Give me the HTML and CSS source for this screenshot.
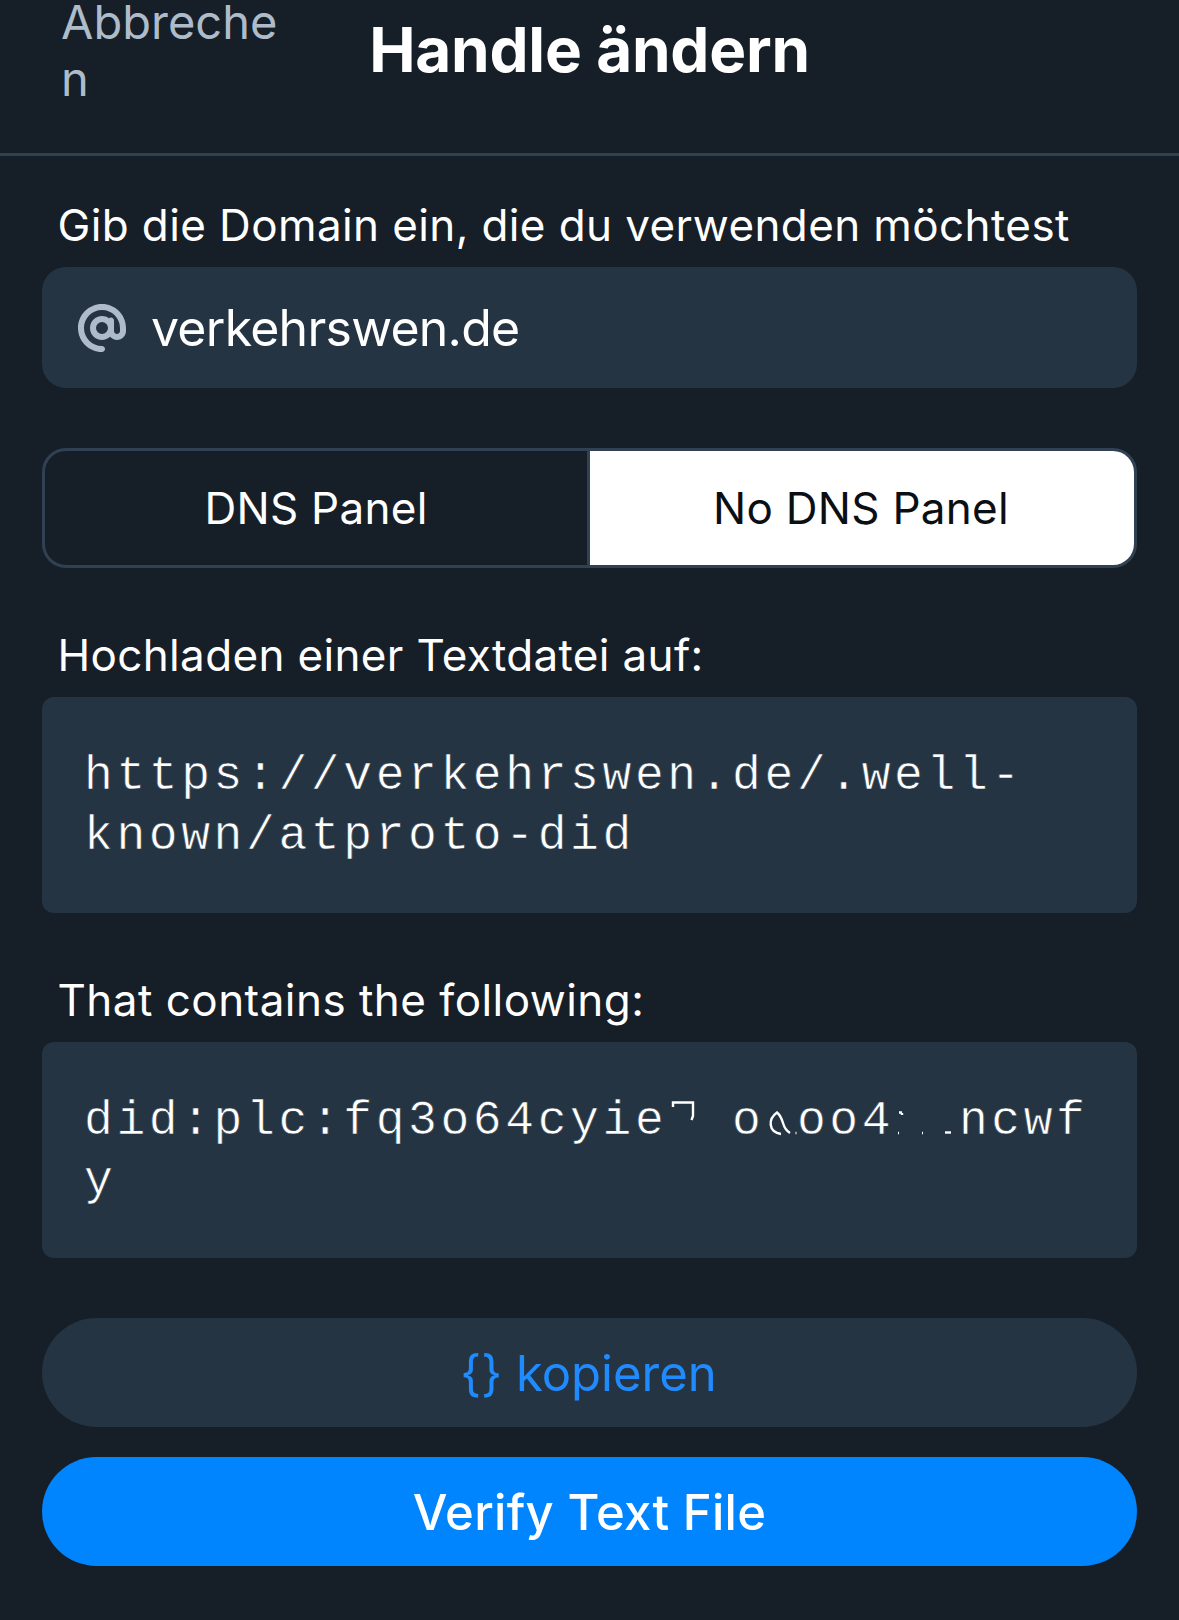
FILE: index.html
```html
<!DOCTYPE html>
<html lang="de">
<head>
<meta charset="utf-8">
<title>Handle ändern</title>
<link rel="stylesheet" href="styles.css">
</head>
<body>
<header class="header">
  <a class="cancel">Abbrechen</a>
  <h1 class="title">Handle ändern</h1>
</header>
<main class="content">
  <label class="label label-domain" for="domain">Gib die Domain ein, die du verwenden möchtest</label>
  <div class="field">
    <svg class="at" viewBox="0 0 512 512" aria-hidden="true"><path d="M256 64C150 64 64 150 64 256s86 192 192 192c17.700 0 32 14.300 32 32s-14.300 32-32 32C114.600 512 0 397.400 0 256S114.600 0 256 0S512 114.600 512 256v32c0 53-43 96-96 96c-29.300 0-55.600-13.200-73.200-33.900C320 371.100 289.500 384 256 384c-70.700 0-128-57.300-128-128s57.300-128 128-128c27.900 0 53.700 8.900 74.700 24.100c5.700-5 13.100-8.100 21.300-8.100c17.700 0 32 14.300 32 32v112c0 17.700 14.300 32 32 32s32-14.300 32-32V256c0-106-86-192-192-192zm64 192a64 64 0 1 0-128 0a64 64 0 1 0 128 0z"/></svg>
    <span class="field-text" id="domain">verkehrswen.de</span>
  </div>
  <div class="segments">
    <div class="segment"><span>DNS Panel</span></div>
    <div class="segment active"><span>No DNS Panel</span></div>
  </div>
  <p class="label label-upload">Hochladen einer Textdatei auf:</p>
  <div class="code">https://verkehrswen.de/.well-<wbr>known/atproto-did</div>
  <p class="label label-contains">That contains the following:</p>
  <div class="code did">did:plc:fq3o64cyie<span class="remnant"><svg viewBox="0 0 32 32" aria-hidden="true"><path d="M6 5V0.500H26V14L24.500 18"/></svg></span>&nbsp;o<span class="remnant"><svg viewBox="0 0 32 32" aria-hidden="true"><path d="M16 32C3 30 3 17 12 10.500Q16 14 18 21T25 31M30.500 31h1"/></svg></span>oo4<span class="remnant"><svg viewBox="0 0 32 32" aria-hidden="true"><path d="M5 10.500h3M8 11v2M4 31h1M28 31h1"/></svg></span><span class="remnant"><svg viewBox="0 0 32 32" aria-hidden="true"><path d="M18 30.500h6"/></svg></span>ncwfy</div>
  <div class="actions">
    <button class="button secondary">{} kopieren</button>
    <button class="button primary">Verify Text File</button>
  </div>
</main>
</body>
</html>
```
FILE: styles.css
```css
* { box-sizing: border-box; }

body {
  margin: 0;
  width: 1179px;
  height: 1620px;
  overflow: hidden;
  background: #161e27;
  color: #fff;
  font-family: Inter, "Liberation Sans", sans-serif;
  display: flex;
  flex-direction: column;
}

h1, p { margin: 0; }

.header {
  display: grid;
  grid-template-columns: 226px 1fr 226px;
  height: 156px;
  padding: 0 61px;
  border-bottom: 3px solid #304153;
  flex: none;
}

.cancel {
  margin-top: -7px;
  font-size: 47px;
  line-height: 57px;
  color: #aebbc9;
  word-break: break-all;
}

.title {
  text-align: center;
  font-size: 62px;
  line-height: 76px;
  letter-spacing: -0.2px;
  font-weight: 700;
  padding-top: 12px;
  white-space: nowrap;
}

.content {
  padding: 0 42px;
  display: flex;
  flex-direction: column;
}

.label {
  padding-left: 15.5px;
  font-size: 44px;
  line-height: 60px;
  letter-spacing: 0.39px;
  white-space: nowrap;
}

.label-domain { margin: 39px 0 12px; }
.label-upload { margin: 57px 0 12px; letter-spacing: 0.34px; }
.label-contains { margin: 57px 0 12px; letter-spacing: 0.46px; }

.field {
  height: 121px;
  border-radius: 24px;
  background: #253443;
  display: flex;
  align-items: center;
  gap: 25px;
  padding-left: 36px;
}

.at {
  width: 48px;
  height: 48px;
  fill: #aebbc9;
}

.field-text {
  font-size: 50px;
  line-height: 60px;
  letter-spacing: -0.75px;
}

.segments {
  display: flex;
  height: 120px;
  margin-top: 60px;
  border: 3px solid #304153;
  border-radius: 24px;
  overflow: hidden;
}

.segment {
  flex: 1;
  display: flex;
  align-items: center;
  justify-content: center;
  font-size: 44px;
  letter-spacing: 0.28px;
}

.segment.active {
  background: #fff;
  color: #0b0f14;
  border-left: 3px solid #304153;
  padding-right: 2px;
}

.code {
  height: 216px;
  padding: 49px 36px 0 42px;
  border-radius: 12px;
  background: #253443;
  font-family: "Liberation Mono", monospace;
  font-size: 48px;
  line-height: 60px;
  letter-spacing: 3.6px;
  -webkit-text-stroke: 0.6px #253443;
}

.did { word-break: break-all; }

.remnant {
  display: inline-block;
  width: 32.4px;
  height: 32px;
}

.remnant svg {
  display: block;
  width: 32px;
  height: 32px;
  overflow: visible;
  fill: none;
  stroke: #fff;
  stroke-width: 2.4;
}

.actions {
  margin-top: 60px;
  display: flex;
  flex-direction: column;
  gap: 30px;
}

.button {
  height: 109px;
  border: 0;
  border-radius: 55px;
  font-family: inherit;
  font-size: 49px;
  padding: 2px 0 0;
}

.secondary { background: #253443; color: #208bfe; padding-right: 2px; }
.primary { background: #0085ff; color: #fff; font-weight: 500; letter-spacing: 0.3px; }
```
